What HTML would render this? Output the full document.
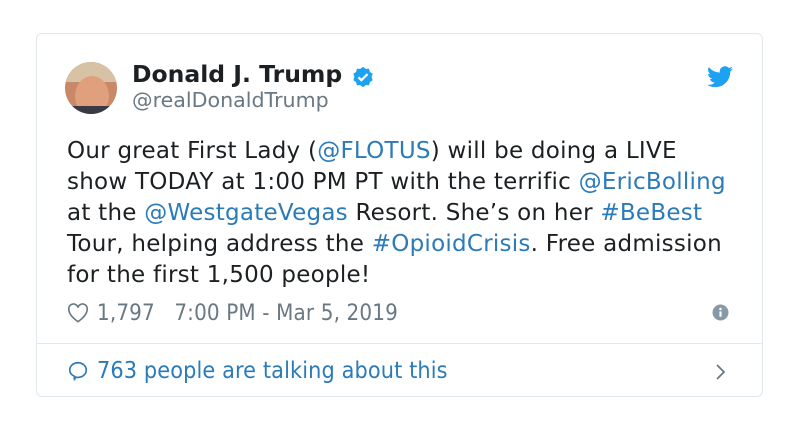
<!DOCTYPE html><html><head><style>
body{margin:0;width:800px;height:432px;background:#fff;font-family:"DejaVu Sans","Liberation Sans",sans-serif;position:relative;overflow:hidden}
.card{position:absolute;left:36px;top:33px;width:727px;height:364px;border:1px solid #e1e8ed;border-radius:6px;box-sizing:border-box}
.a{position:absolute;white-space:nowrap}
.txt{position:absolute;left:67px;top:136px;font-size:23px;line-height:31px;color:#1c2022;white-space:nowrap;letter-spacing:0.25px}
.l{color:#2b7bb9}
.c{font-family:"DejaVu Sans Condensed","DejaVu Sans",sans-serif}
</style></head><body>
<div class="card"></div>
<div class="a" style="left:65px;top:62px;width:52px;height:52px;border-radius:50%;overflow:hidden;background:#c98868">
<div style="position:absolute;left:0;top:0;width:52px;height:20px;background:#d8c2a6"></div>
<div style="position:absolute;left:10px;top:14px;width:34px;height:40px;border-radius:50%;background:#e0a07e"></div>
<div style="position:absolute;left:0;top:44px;width:52px;height:10px;background:#3a3a44"></div>
</div>
<div class="a" style="left:132px;top:60px;font-size:23.5px;font-weight:bold;color:#1c2022">Donald J. Trump</div>
<svg class="a" style="left:352px;top:66px" width="22" height="22" viewBox="0 0 24 24"><path fill="#1da1f2" d="M12 1l3 2.2 3.6-.2 1 3.5 3 2-1.3 3.5 1.3 3.5-3 2-1 3.5-3.6-.2L12 23l-3-2.2-3.6.2-1-3.5-3-2L2.7 12 1.4 8.5l3-2 1-3.5L9 3.2z"/><path d="M7 12.3l3.2 3.2L17 8.8" stroke="#fff" stroke-width="2.4" fill="none"/></svg>
<div class="a" style="left:132px;top:88px;font-size:20.6px;color:#697882">@realDonaldTrump</div>
<svg class="a" style="left:707px;top:66px" width="26" height="22" viewBox="0 0 24 20"><path fill="#1da1f2" d="M24 2.4a9.8 9.8 0 0 1-2.8.8A4.9 4.9 0 0 0 23.3.5a9.9 9.9 0 0 1-3.1 1.2A4.9 4.9 0 0 0 11.8 6 14 14 0 0 1 1.7.9a4.9 4.9 0 0 0 1.5 6.6A4.9 4.9 0 0 1 1 6.9a4.9 4.9 0 0 0 3.9 4.8 4.9 4.9 0 0 1-2.2.1 4.9 4.9 0 0 0 4.6 3.4A9.9 9.9 0 0 1 0 17.2 14 14 0 0 0 7.5 19.4c9 0 14-7.5 14-14v-.6A10 10 0 0 0 24 2.4z"/></svg>
<div class="txt">Our great First Lady (<span class="l">@FLOTUS</span>) will be doing a LIVE<br>show TODAY at 1:00 PM PT with the terrific <span class="l">@EricBolling</span><br>at the <span class="l">@WestgateVegas</span> Resort. She’s on her <span class="l">#BeBest</span><br>Tour, helping address the <span class="l">#OpioidCrisis</span>. Free admission<br>for the first 1,500 people!</div>
<svg class="a" style="left:67px;top:303px" width="22" height="20" viewBox="0 0 24 22"><path d="M12 20.5S2 14 2 7.5A5 5 0 0 1 12 5a5 5 0 0 1 10 2.5C22 14 12 20.5 12 20.5z" fill="none" stroke="#697882" stroke-width="1.8"/></svg>
<div class="a c" style="left:97px;top:300px;font-size:22.2px;color:#697882;letter-spacing:0.15px">1,797 &nbsp; 7:00 PM - Mar 5, 2019</div>
<svg class="a" style="left:712px;top:304px" width="17" height="17" viewBox="0 0 16 16"><circle cx="8" cy="8" r="7.5" fill="#8899a6"/><rect x="7" y="7" width="2" height="5" fill="#fff"/><circle cx="8" cy="4.7" r="1.2" fill="#fff"/></svg>
<div class="a" style="left:37px;top:343px;width:725px;height:1px;background:#e1e8ed"></div>
<svg class="a" style="left:67px;top:360px" width="22" height="22" viewBox="0 0 24 24"><path d="M12 3c5 0 9 3.5 9 8s-4 8-9 8c-1 0-2-.1-2.8-.4L8 22v-4.3C5 16.3 3 13.8 3 11c0-4.5 4-8 9-8z" fill="none" stroke="#2b7bb9" stroke-width="1.8"/></svg>
<div class="a c" style="left:97px;top:357px;font-size:23.2px;color:#2b7bb9;letter-spacing:0.12px">763 people are talking about this</div>
<svg class="a" style="left:714px;top:362px" width="12" height="20" viewBox="0 0 12 20"><path d="M3 3l7 7-7 7" fill="none" stroke="#697882" stroke-width="1.8"/></svg>
</body></html>
